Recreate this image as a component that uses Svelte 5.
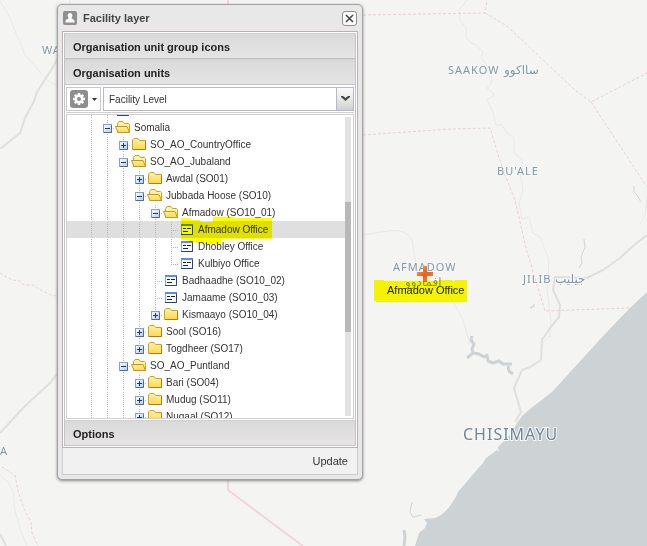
<script>
	const tree = [
		{ depth: 1, kind: 'leaf', name: '' },
		{ depth: 1, kind: 'open', name: 'Somalia' },
		{ depth: 2, kind: 'closed', name: 'SO_AO_CountryOffice' },
		{ depth: 2, kind: 'open', name: 'SO_AO_Jubaland' },
		{ depth: 3, kind: 'closed', name: 'Awdal (SO01)' },
		{ depth: 3, kind: 'open', name: 'Jubbada Hoose (SO10)' },
		{ depth: 4, kind: 'open', name: 'Afmadow (SO10_01)' },
		{ depth: 5, kind: 'leaf', name: 'Afmadow Office', marked: true },
		{ depth: 5, kind: 'leaf', name: 'Dhobley Office' },
		{ depth: 5, kind: 'leaf', name: 'Kulbiyo Office', last: true },
		{ depth: 4, kind: 'leaf', name: 'Badhaadhe (SO10_02)' },
		{ depth: 4, kind: 'leaf', name: 'Jamaame (SO10_03)' },
		{ depth: 4, kind: 'closed', name: 'Kismaayo (SO10_04)', last: true },
		{ depth: 3, kind: 'closed', name: 'Sool (SO16)' },
		{ depth: 3, kind: 'closed', name: 'Togdheer (SO17)', last: true },
		{ depth: 2, kind: 'open', name: 'SO_AO_Puntland' },
		{ depth: 3, kind: 'closed', name: 'Bari (SO04)' },
		{ depth: 3, kind: 'closed', name: 'Mudug (SO11)' },
		{ depth: 3, kind: 'closed', name: 'Nugaal (SO12)' }
	];

	let selected = $state('Afmadow Office');
	let level = $state('Facility Level');
</script>

<div class="page">
	<svg class="map" viewBox="0 0 647 546" preserveAspectRatio="xMinYMin slice">
		<defs>
			<linearGradient id="plus" x1="0" y1="0" x2="1" y2="1">
				<stop offset="0" stop-color="#f9a86a" />
				<stop offset="0.5" stop-color="#ea5f1c" />
				<stop offset="1" stop-color="#f08a4a" />
			</linearGradient>
			<linearGradient id="knob" x1="0" y1="0" x2="1" y2="1">
				<stop offset="0" stop-color="#fff" />
				<stop offset="1" stop-color="#b4cbea" />
			</linearGradient>
			<linearGradient id="paper" x1="0" y1="0" x2="0" y2="1">
				<stop offset="0" stop-color="#fff3a0" />
				<stop offset="1" stop-color="#ffd654" />
			</linearGradient>
		</defs>
		<!-- sea -->
		<path class="water" d="M647 292 L629 309 L605 334 L572 370 L563 380 L552 392 L530 409 L523 415 L517 423 L510 435 L498 447 L499 452 L497 450 L486 458 L483 463 L475 472 L458 492 L456 497 L450 506 Q442 516 435 518 L424 519 L427 523 L425 528 L419 533 L415 546 H647Z" />
		<!-- lakes and streams -->
		<path class="lake" d="M472 336 l-1 4 3 4 -2 5 1 4 -6 5 M473 353 l6 1 5 3 3 -2 1 6 5 2 6 -2 4 3 9 0 M508 366 l1 5 4 3" />
		<path class="stream" d="M584 239 l1 8 -4 10 1 6 -3 5 M634 186 l0 6 3 3 4 7 M530 308 l5 -4 M531 308 l4 -2 M412 502 l-2 10 3 5 8 -2" />
		<path class="lake" d="M404 530 l1 7 -1 9" />
		<!-- rivers and roads -->
		<path class="thin" d="M467 0 L463 5 L459 10 L460 20 L466 28 L466 37 L471 43 L475 44 L483 52 L481 58 L487 65 L492 78 L491 84 L487 88 L495 95 L487 100 L493 112 L496 125 L502 125 L507 133 L514 138 L514 153 L523 160 L520 173 L523 190 L519 203 L522 219 L529 217 L533 233 L540 237 L545 250 L549 260 L547 290 L551 320 L550 336 L543 342" />
		<path class="thin" d="M363 235 L388 231 Q406 228 412 240 L415 258 L421 280 L449 295 L463 320 L470 344 M647 196 L645 215 L640 224" />
		<path class="road" d="M647 235 Q630 248 620 258 L603 270 L587 278 L555 277 L553 290 L560 305 L559 317 L550 328 L542 340 L541 360 L530 367 L522 370 L514 388 L521 412 L515 422" />
		<path class="thin" d="M0 1 L8 14 L25 55 L46 79 L57 86 L64 87 M0 475 L8 482 L13 492 L15 510 L20 528 L27 546 M70 0 V8" />
		<path class="road" d="M0 149 L20 133 L25 118 L34 101 L37 92 L53 67 L59 56 M0 433 L25 406 L50 383 L56 375 L60 373 M0 534 L6 546" />
		<!-- borders -->
		<path class="border" d="M363 15 L485 13 L487 0 M485 13 L507 26 L543 60 L575 90 L591 102 L647 73 M591 102 L647 187 M363 135 L450 129 L490 128 L503 170 L515 200 L527 252 L545 311 L629 308" />
		<path class="border" d="M0 273 L12 280 L20 281 L24 285 L33 285 L42 291 L52 295 L60 297 M2 467 L15 475 L18 491 L24 509 L31 522 L32 533 L38 546" />
		<path class="region" d="M228 0 V490 L284 532 L303 546" />
		<!-- places -->
		<g class="place">
			<text x="42" y="54">WAJIR</text>
			<text x="0" y="455">A</text>
			<text x="448" y="74">SAAKOW</text>
			<text x="504" y="74" class="arabic">سااكوو</text>
			<text x="497" y="175">BU'ALE</text>
			<text x="393" y="271">AFMADOW</text>
			<text x="405" y="286" class="arabic">افمادوو</text>
			<text x="523" y="283">JILIB</text>
			<text x="555" y="283" class="arabic">جيليب</text>
			<text x="463" y="440" class="city">CHISIMAYU</text>
		</g>
		<path class="marker" d="M423 266 h4 v6 h6 v4 h-6 v6 h-4 v-6 h-6 v-4 h6Z" fill="url(#plus)" />
		<path class="ink" d="M374 280 H384 V281 H439 V280 H452 V281 H455 V280 H467 V302 H376 V301 H374Z" />
		<text x="387" y="294" class="facility">Afmadow Office</text>
	</svg>

	<section class="window" aria-label="Facility layer">
		<header class="title">
			<svg class="badge" viewBox="0 0 14 14">
				<rect width="14" height="14" rx="2" fill="#8f8f8f" />
				<path d="M7 2 a2.400 2.600 0 0 1 1.600 4.600 l0 .8 Q12 8.500 11.500 11.500 h-9 Q2 8.500 5.400 7.400 l0 -.8 A2.400 2.600 0 0 1 7 2Z" fill="#fff" />
			</svg>
			<h1>Facility layer</h1>
			<button class="close" aria-label="Close">
				<svg viewBox="0 0 15 15">
					<rect x="0.500" y="0.500" width="14" height="14" rx="2.500" fill="#fafafa" stroke="#909090" />
					<path d="M4 4 l7 7 M11 4 l-7 7" stroke="#444" stroke-width="1.500" />
				</svg>
			</button>
		</header>

		<div class="body">
			<button class="section">Organisation unit group icons</button>
			<button class="section">Organisation units</button>

			<div class="units">
				<div class="toolbar">
					<button class="gear" aria-label="Selection mode">
						<svg width="18" height="18" viewBox="0 0 18 18">
							<rect width="18" height="18" rx="3" fill="#8e8e8e" />
							<path d="M9 3 V15 M3 9 H15 M4.800 4.800 L13.200 13.200 M13.200 4.800 L4.800 13.200" stroke="#fff" stroke-width="2.500" />
							<circle cx="9" cy="9" r="4.500" fill="#fff" />
							<circle cx="9" cy="9" r="2" fill="#8e8e8e" />
						</svg>
						<svg width="5" height="3" viewBox="0 0 5 3"><path d="M0 0 H5 L2.500 3Z" fill="#333" /></svg>
					</button>
					<div class="combo">
						<select bind:value={level} aria-label="Level">
							<option>Facility Level</option>
						</select>
						<span class="trigger">
							<svg width="9" height="6" viewBox="0 0 9 6"><path d="M0 0 H2 L4.500 2 L7 0 H9 V1 L4.500 5 L0 1Z" fill="#444" /></svg>
						</span>
					</div>
				</div>

				<div class="treebox">
					<ul class="tree">
						{#each tree as node}
							<li class:selected={node.name === selected}>
								{#each { length: node.depth } as _}
									<svg class="cell" viewBox="0 0 16 17"><path class="dots" d="M8.500 1 V17" /></svg>
								{/each}
								<svg class="cell" viewBox="0 0 16 17">
									<path class="dots" d={node.last ? 'M8.500 1 V10' : 'M8.500 1 V17'} />
									<path class="dots" d="M10 9.500 H16" />
									{#if node.kind !== 'leaf'}
										<rect x="4.500" y="5.500" width="8" height="8" fill="url(#knob)" stroke="#86a2cc" />
										<path d="M5 13.500 h7.500 v-7" fill="none" stroke="#4a6a9c" />
										<path d={node.kind === 'open' ? 'M6 9.500 h5' : 'M6 9.500 h5 M8.500 7 v5'} stroke="#1c3a66" />
									{/if}
								</svg>
								<svg class="cell" viewBox="0 0 16 17">
									{#if node.kind === 'leaf'}
										<rect x="2.500" y="3.500" width="11" height="10" fill="#f4f8ff" stroke="#8aa6dc" />
										<path d="M2 4 h12" stroke="#5f8be4" stroke-width="2" />
										<path d="M2 13.500 h11.500 v-9" fill="none" stroke="#2c4472" />
										<path d="M4 7.500 h3 M8 7.500 h4 M4 10.500 h5" stroke="#222" />
									{:else if node.kind === 'open'}
										<path d="M2.500 13.500 V4.500 L4 2.500 H8 L9.500 4.500 H13.500 L14.500 5.500 V13.500Z" fill="#fff3a8" stroke="#cf9f26" />
										<path d="M0.500 7.500 H12 L14.500 13.500 H3Z" fill="url(#paper)" stroke="#c99618" />
									{:else}
										<path d="M1.500 13.500 V4 L3 2.500 H7 L8.500 4.500 H14.500 V13.500Z" fill="url(#paper)" stroke="#cf9f2c" />
										<path d="M2 13.500 H14.500 V5" fill="none" stroke="#b07c14" />
									{/if}
								</svg>
								<button class="name" onclick={() => (selected = node.name)}>{node.name}</button>
								{#if node.marked}
									<svg class="ink pen" viewBox="0 0 91 27"><path d="M0 1 H8 L12 3 H19 L20 5 H32 V0 H54 V1 H91 V22 H48 L40 23 V27 H18 L14 25 H9 L8 23 H0Z" /></svg>
								{/if}
							</li>
						{/each}
					</ul>
					<div class="track"><div class="thumb"></div></div>
				</div>
			</div>

			<button class="section">Options</button>
		</div>

		<footer>
			<button class="update">Update</button>
		</footer>
	</section>
</div>

<style>
	:global(body) {
		margin: 0;
	}
	.page {
		position: relative;
		box-sizing: border-box;
		min-height: 100vh;
		padding: 4px 0 0 57px;
		overflow: hidden;
		background: #f4f4f2;
		font-family: Arial, "Liberation Sans", sans-serif;
		color: #333;
	}
	button,
	select {
		margin: 0;
		padding: 0;
		border: 0;
		background: none;
		font: inherit;
		color: inherit;
	}
	svg {
		display: block;
		flex: none;
	}

	.map {
		position: absolute;
		top: 0;
		left: 0;
		width: 100%;
		height: 100%;
		fill: none;
	}
	.water {
		fill: #cdd2d4;
	}
	.lake {
		stroke: #cdd2d4;
		stroke-width: 3;
		stroke-linejoin: round;
	}
	.stream {
		stroke: #d0d5d7;
	}
	.thin {
		stroke: #e8e8e6;
	}
	.road {
		stroke: #dfdfdd;
		stroke-width: 2;
		stroke-linejoin: round;
	}
	.border {
		stroke: #ecd0d2;
		stroke-dasharray: 3 2;
	}
	.region {
		stroke: #f0d6da;
		stroke-width: 2;
	}
	.place {
		font-family: "Noto Sans", "Open Sans", "DejaVu Sans", sans-serif;
		font-size: 11px;
		letter-spacing: 1px;
		fill: #8496a6;
		stroke: #f8f8f7;
		stroke-width: 2px;
		paint-order: stroke;
	}
	.arabic {
		font-family: "DejaVu Sans", sans-serif;
		font-size: 12px;
		letter-spacing: 0;
	}
	.city {
		font-size: 16px;
		fill: #6f8799;
	}
	.ink {
		fill: #ffff00;
		mix-blend-mode: multiply;
	}
	.facility {
		font-size: 11px;
		fill: #222;
	}

	.window {
		position: relative;
		box-sizing: border-box;
		width: 306px;
		padding: 0 4px 4px;
		border: 1px solid #a2a2a2;
		border-radius: 5px;
		background: #e8e8e8;
		box-shadow: 0 1px 3px #888;
	}
	.title {
		display: flex;
		align-items: center;
		height: 26px;
		padding: 0 1px;
	}
	.badge {
		width: 14px;
		height: 14px;
	}
	h1 {
		flex: 1;
		margin: 0;
		padding-left: 6px;
		font-size: 11px;
		line-height: 14px;
		color: #444;
	}
	.close {
		width: 15px;
		height: 15px;
	}
	.body {
		padding: 1px;
		border: 1px solid #bcb0b4;
		background: #fff;
	}
	.section {
		display: block;
		box-sizing: border-box;
		width: 100%;
		height: 26px;
		padding: 2px 0 0 8px;
		border: 1px solid #c4c4c4;
		border-top-color: #d0d0d0;
		background: linear-gradient(#dadada, #e4e4e4);
		font-size: 11px;
		font-weight: bold;
		text-align: left;
		color: #222;
	}
	.units {
		padding: 2px 1px 1px;
		border: 0 solid #c4c4c4;
		border-width: 0 1px;
	}
	.toolbar {
		display: flex;
		gap: 2px;
		height: 24px;
		padding-bottom: 1px;
		border-bottom: 1px solid #d0d0d0;
	}
	.gear {
		display: flex;
		align-items: center;
		justify-content: center;
		gap: 4px;
		box-sizing: border-box;
		width: 35px;
		border: 1px solid #c8c8c8;
	}
	.combo {
		display: flex;
		flex: 1;
		border: 1px solid #b5b8c8;
	}
	select {
		flex: 1;
		padding-left: 5px;
		appearance: none;
		font-size: 10px;
	}
	.trigger {
		display: flex;
		align-items: center;
		justify-content: center;
		width: 16px;
		border-left: 1px solid #b5b8c8;
		background: linear-gradient(#fafafa, #e8e8e8 50%, #d0d0d0);
		pointer-events: none;
	}
	.treebox {
		display: flex;
		height: 303px;
		margin-top: 1px;
		border: 1px solid #d0d0d0;
		overflow: hidden;
	}
	.tree {
		flex: 1;
		margin: -13px 0 0;
		padding: 0;
		list-style: none;
	}
	li {
		position: relative;
		display: flex;
		align-items: center;
		height: 17px;
		padding-left: 16px;
	}
	.selected {
		background: #dfdfdf;
	}
	.cell {
		width: 16px;
		height: 17px;
	}
	.dots {
		fill: none;
		stroke: #b4b4b4;
		stroke-dasharray: 1 1;
	}
	.name {
		padding-left: 3px;
		font-size: 10px;
		line-height: 17px;
		white-space: nowrap;
	}
	.pen {
		position: absolute;
		z-index: 1;
		top: -4px;
		left: 114px;
		width: 91px;
		height: 27px;
		pointer-events: none;
	}
	.track {
		width: 6px;
		margin: 2px 2px 2px 0;
		padding-top: 85px;
		box-sizing: border-box;
		background: #e2e2e2;
	}
	.thumb {
		height: 130px;
		background: #b8b8b8;
	}
	footer {
		display: flex;
		align-items: center;
		justify-content: flex-end;
		height: 26px;
		padding-right: 9px;
		border: 1px solid #ccc;
		border-top: 0;
		background: #f1f1f1;
	}
	.update {
		font-size: 11px;
	}
</style>
